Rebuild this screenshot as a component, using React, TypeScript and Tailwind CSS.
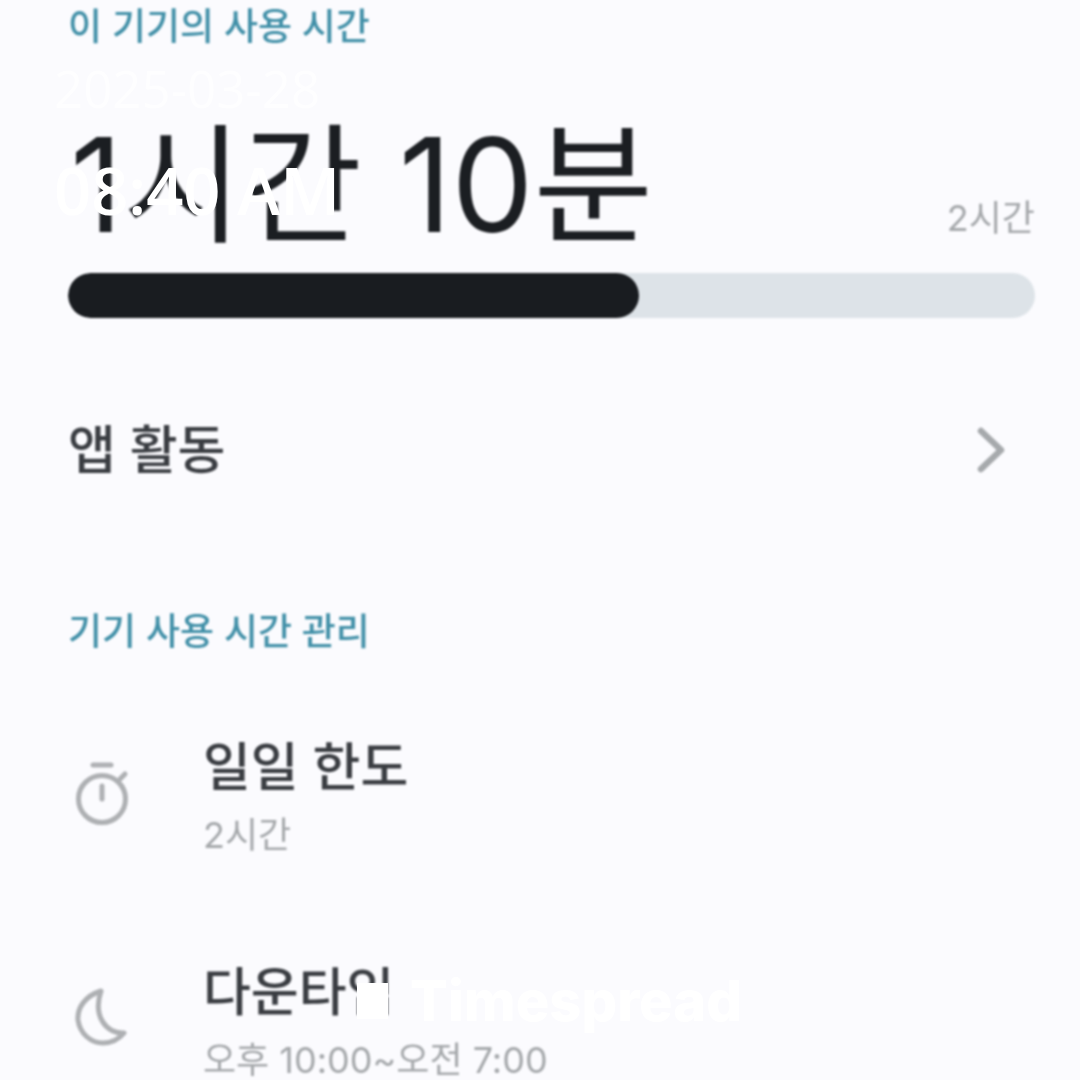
import React from "react";

function Row({ icon, title, sub, className }: { icon: React.ReactNode; title: string; sub: string; className?: string }) {
  return (
    <div className={"flex items-center " + (className ?? "")}>
      <div className="-mt-[8px] w-[135px] shrink-0 pl-[7px]">{icon}</div>
      <div className="flex flex-col">
        <div className="text-[52px] leading-[60px] font-medium text-[#3a3d42]">{title}</div>
        <div className="mt-[15px] text-[36px] leading-[44px] text-[#a5a8ab]">{sub}</div>
      </div>
    </div>
  );
}

export default function App() {
  return (
    <div className="relative h-[1080px] w-[1080px] overflow-hidden bg-[#fbfbfe] font-['Inter','Noto_Sans_CJK_KR',sans-serif]">
      <div className="flex flex-col pl-[68px] pr-[45px] pt-[3px] blur-[0.8px]">
        <div className="text-[37px] leading-[48px] font-medium text-[#4290a8]">이 기기의 사용 시간</div>
        <div className="mt-[69px] flex items-end justify-between">
          <div className="ml-[2px] text-[130px] leading-[130px] text-[#1b1e22]">1시간 10분</div>
          <div className="mb-[10px] text-[36px] leading-[44px] text-[#a5a8ab]">2시간</div>
        </div>
        <div className="mt-[23px] h-[45px] w-full overflow-hidden rounded-full bg-[#dde3e8]">
          <div className="h-full w-[571px] rounded-full bg-[#191c20]" />
        </div>
        <div className="mt-[99px] flex items-center justify-between pr-[29px]">
          <div className="text-[52px] leading-[68px] font-medium text-[#3a3d42]">앱 활동</div>
          <svg className="-mt-[2px]" width="30" height="46" viewBox="0 0 30 46" fill="none" stroke="#a6a9ac" strokeWidth="6.5" strokeLinecap="round" strokeLinejoin="round">
            <path d="M5 4 L25 23 L5 42" />
          </svg>
        </div>
        <div className="mt-[123px] text-[37px] leading-[48px] font-medium text-[#4290a8]">기기 사용 시간 관리</div>
        <Row
          className="mt-[82px]"
          title="일일 한도"
          sub="2시간"
          icon={
            <svg width="60" height="64" viewBox="0 0 60 64" fill="none" stroke="#aeb0b3" strokeWidth="5" strokeLinecap="round">
              <path d="M18 3 H36" />
              <circle cx="27" cy="37" r="23.5" />
              <path d="M27 24 V37" />
              <path d="M45 17 L50 12" />
            </svg>
          }
        />
        <Row
          className="mt-[106px]"
          title="다운타임"
          sub="오후 10:00~오전 7:00"
          icon={
            <svg className="-mt-[3px]" width="58" height="58" viewBox="0 0 58 58" fill="none" stroke="#aeb0b3" strokeWidth="5" strokeLinejoin="round">
              <path d="M26 3 C10 8 2 20 3 32 C5 46 16 55 28 55 C37 55 44 51 49 45 C33 46 17 30 26 3 Z" />
            </svg>
          }
        />
      </div>

      <div className="absolute left-[54px] top-[58px] text-[51px] leading-[60px] text-white/70 font-['Open_Sans',sans-serif]">2025-03-28</div>
      <div className="absolute left-[54px] top-[153px] text-[65px] leading-[74px] font-semibold text-white font-['Open_Sans',sans-serif]">08:40 AM</div>
      <div className="absolute left-[357px] top-[971px] flex items-center gap-[22px] text-white">
        <div className="h-[36px] w-[31px] bg-white" />
        <div className="text-[56px] leading-[60px] font-extrabold font-['Inter',sans-serif]">Timespread</div>
      </div>
    </div>
  );
}
